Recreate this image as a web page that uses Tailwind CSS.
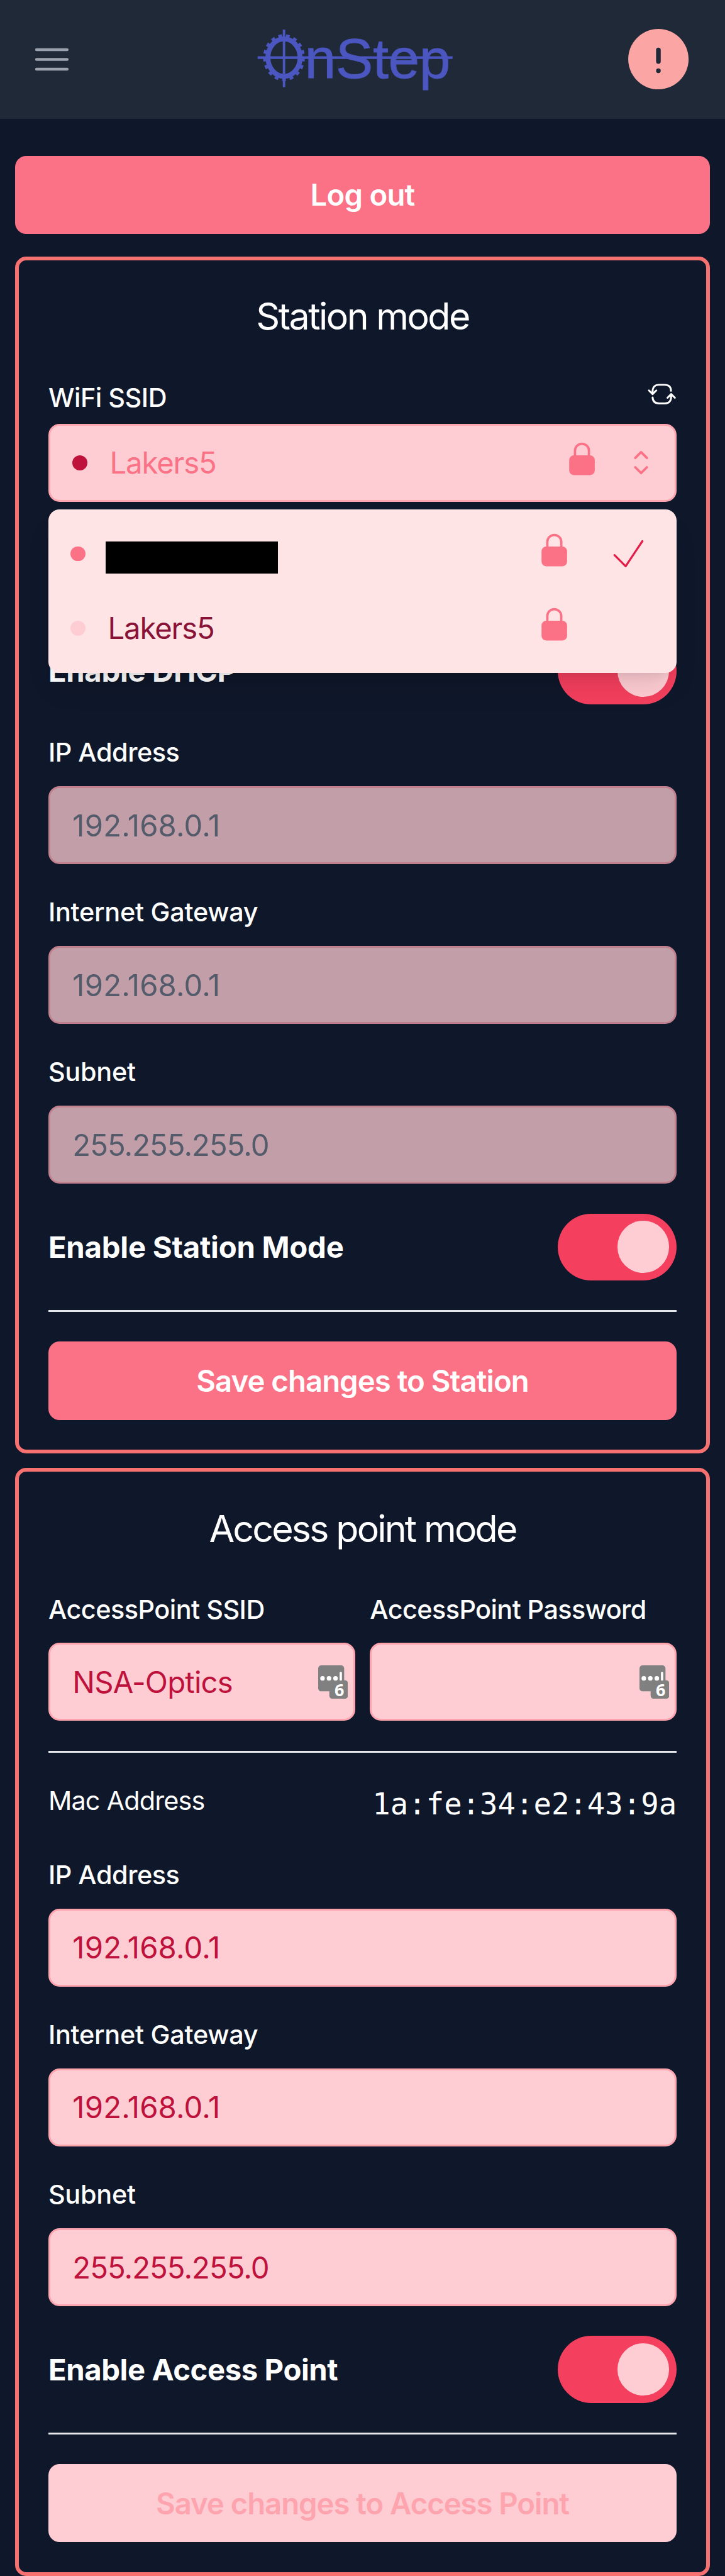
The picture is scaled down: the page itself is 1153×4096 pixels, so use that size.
<!DOCTYPE html>
<html lang="en" class="text-[47.28px]">
<head>
<meta charset="utf-8">
<meta name="viewport" content="width=device-width, initial-scale=1">
<title>OnStep WiFi</title>
<script src="https://cdn.jsdelivr.net/npm/@tailwindcss/browser@4"></script>
</head>
<body class="bg-[#0f172a] font-[Inter,sans-serif] text-base text-white overflow-x-hidden">
<svg class="hidden">
  <defs>
    <symbol id="lock" viewBox="0 0 24 24">
      <path d="M16.5 10.5V6.75a4.5 4.5 0 1 0-9 0v3.75" fill="none" stroke="currentColor" stroke-width="1.5" stroke-linecap="round"/>
      <path d="M6.75 21.75h10.5a2.25 2.25 0 0 0 2.25-2.25v-6.75a2.25 2.25 0 0 0-2.25-2.25H6.75a2.25 2.25 0 0 0-2.25 2.25v6.75a2.25 2.25 0 0 0 2.25 2.25z" fill="currentColor" stroke="currentColor" stroke-width="1.5"/>
    </symbol>
    <symbol id="passkey" viewBox="99 54 144 162">
      <rect x="99" y="54" width="126" height="126" rx="15" fill="#808080"/>
      <rect x="153" y="126" width="90" height="90" rx="15" fill="#808080"/>
      <circle cx="120" cy="117" r="11" fill="#fff"/><circle cx="151.500" cy="117" r="11" fill="#fff"/><circle cx="183" cy="117" r="11" fill="#fff"/>
      <rect x="203" y="86" width="11" height="42" rx="3" fill="#fff"/>
      <text x="202" y="203" text-anchor="middle" font-family="Open Sans, sans-serif" font-weight="700" font-size="82" fill="#fff">6</text>
    </symbol>
  </defs>
</svg>

<header class="h-16 px-4 bg-[#1f2937] flex items-center justify-between">
  <button class="w-8" aria-label="Menu">
    <svg class="size-6 text-[#9ca3af]" viewBox="0 0 24 24" fill="none" stroke="currentColor" stroke-width="1.5" stroke-linecap="round"><path d="M3.750 6.750h16.500M3.750 12h16.500M3.750 17.250h16.500"/></svg>
  </button>
  <svg class="w-[6.625rem] h-8 overflow-visible blur-[0.7px]" viewBox="414 48 318 96" fill="none" stroke="#4b56c0">
    <ellipse cx="458.300" cy="93.300" rx="26" ry="30.200" stroke-width="8"/>
    <ellipse cx="458.300" cy="93.300" rx="31" ry="35" stroke-width="5.500" stroke-dasharray="6 6.200"/>
    <path d="M458.300 48v93" stroke-width="4"/>
    <path d="M415.700 93.300H730.500" stroke-width="4.500"/>
    <text x="492" y="126.500" textLength="235" font-family="Liberation Sans, Arial, sans-serif" font-size="90" fill="#4b56c0" stroke-width="1">nStep</text>
  </svg>
  <svg class="size-10 text-[#fca5a5]" viewBox="0 0 24 24" fill="currentColor"><path fill-rule="evenodd" d="M2.250 12c0-5.385 4.365-9.750 9.750-9.750s9.750 4.365 9.750 9.750-4.365 9.750-9.750 9.750S2.250 17.385 2.250 12zM12 8.250a.75.75 0 0 1 .75.75v3.750a.75.75 0 0 1-1.500 0V9a.75.75 0 0 1 .75-.75zm0 8.250a.75.75 0 1 0 0-1.500.75.75 0 0 0 0 1.500z" clip-rule="evenodd"/></svg>
</header>

<main class="px-2 pt-5 flex flex-col">
  <button class="h-[2.625rem] pt-px rounded-md bg-[#fb7185] font-semibold tracking-[-0.016em]">Log out</button>

  <section class="mt-3 border-[6px] border-[#f87171] rounded-md p-4 flex flex-col">
    <h2 class="text-xl leading-7 text-center tracking-[-0.043em] translate-y-px">Station mode</h2>
    <div class="mt-5 flex justify-between">
      <label class="text-sm font-medium tracking-[-0.011em]">WiFi SSID</label>
      <svg class="size-4" viewBox="432 36 144 144" fill="none" stroke="#fff" stroke-width="9" stroke-linecap="round" stroke-linejoin="round">
        <path d="M441 90l18 18 18-18M459 106V96c0-22 12-33 30-33h28c20 0 31 10 31 29"/>
        <path d="M531 126l18-18 18 18M549 110v10c0 22-12 33-30 33h-28c-20 0-31-10-32-29"/>
      </svg>
    </div>
    <div class="relative mt-1">
      <div class="h-[2.625rem] rounded-md border-[3px] border-[#fda4af] bg-[#fecdd3] pl-3 pr-2 flex items-center text-[#fb7185]">
        <span class="size-2 rounded-full bg-[#be123c]"></span>
        <span class="ml-3 pt-[2px] flex-1 tracking-[-0.024em]">Lakers5</span>
        <svg class="size-5 mb-1"><use href="#lock"/></svg>
        <svg class="size-5 ml-3" viewBox="0 0 24 24" fill="none" stroke="currentColor" stroke-width="1.5" stroke-linecap="round" stroke-linejoin="round"><path d="M8.250 15 12 18.750 15.750 15m-7.500-6L12 5.250 15.750 9"/></svg>
      </div>
      <ul class="absolute z-10 inset-x-0 top-full mt-1 py-1 rounded-md bg-[#ffe4e6] text-[#881337] shadow-[0_30px_45px_-9px_rgb(0_0_0/0.1),0_12px_18px_-12px_rgb(0_0_0/0.1)]">
        <li class="h-10 pl-3 pr-3.5 flex items-center">
          <span class="size-2 rounded-full bg-[#fb7185]"></span>
          <span class="ml-[0.67rem] mt-1 w-[5.800rem] h-[1.080rem] bg-black"></span>
          <svg class="size-5 ml-auto mb-1 text-[#fb7185]"><use href="#lock"/></svg>
          <svg class="size-6 ml-[1.125rem] text-[#e11d48]" viewBox="0 0 24 24" fill="none" stroke="currentColor" stroke-width="1.1" stroke-linecap="round" stroke-linejoin="round"><path d="m4.500 12.750 6 6 9-13.500"/></svg>
        </li>
        <li class="h-10 pl-3 pr-3.5 flex items-center">
          <span class="size-2 rounded-full bg-[#fecdd3]"></span>
          <span class="ml-3 pt-[2px] tracking-[-0.024em]">Lakers5</span>
          <svg class="size-5 ml-auto mr-[2.625rem] mb-1 text-[#fb7185]"><use href="#lock"/></svg>
        </li>
      </ul>
    </div>
    <div class="mt-[4.5625rem] flex items-center justify-between">
      <span class="font-bold pt-[2px] tracking-[-0.007em]">Enable DHCP</span>
      <span class="w-16 h-9 px-1 rounded-full bg-[#f43f5e] flex items-center justify-end"><span class="size-7 rounded-full bg-[#fecdd3]"></span></span>
    </div>
    <label class="mt-4 text-sm font-medium tracking-[-0.011em]">IP Address</label>
    <div class="mt-2 h-[2.625rem] px-3 pt-[2px] rounded-md border-[3px] border-[#fda4af] bg-[#fecdd3] text-[#6b7280] opacity-75 flex items-center tracking-[0.003em]">192.168.0.1</div>
    <label class="mt-4 text-sm font-medium tracking-[-0.006em]">Internet Gateway</label>
    <div class="mt-2 h-[2.625rem] px-3 pt-[2px] rounded-md border-[3px] border-[#fda4af] bg-[#fecdd3] text-[#6b7280] opacity-75 flex items-center tracking-[0.003em]">192.168.0.1</div>
    <label class="mt-4 text-sm font-medium tracking-[-0.006em]">Subnet</label>
    <div class="mt-2 h-[2.625rem] px-3 pt-[2px] rounded-md border-[3px] border-[#fda4af] bg-[#fecdd3] text-[#6b7280] opacity-75 flex items-center tracking-[-0.02em]">255.255.255.0</div>
    <div class="mt-4 flex items-center justify-between">
      <span class="font-bold pt-[2px] tracking-[-0.005em]">Enable Station Mode</span>
      <span class="w-16 h-9 px-1 rounded-full bg-[#f43f5e] flex items-center justify-end"><span class="size-7 rounded-full bg-[#fecdd3]"></span></span>
    </div>
    <hr class="mt-4 border-t-[3px] border-[#e5e7eb]">
    <button class="mt-4 h-[2.625rem] pt-[2px] rounded-md bg-[#fb7185] font-semibold tracking-[-0.02em]">Save changes to Station</button>
  </section>

  <section class="mt-2 border-[6px] border-[#f87171] rounded-md p-4 flex flex-col">
    <h2 class="text-xl leading-7 text-center tracking-[-0.048em] translate-y-[2px]">Access point mode</h2>
    <div class="mt-5 grid grid-cols-2 gap-2">
      <div class="flex flex-col">
        <label class="text-sm font-medium tracking-[-0.012em]">AccessPoint SSID</label>
        <div class="mt-2 h-[2.625rem] pl-3 pr-[0.1875rem] rounded-md border-[3px] border-[#fda4af] bg-[#fecdd3] text-[#be123c] flex items-center justify-between"><span class="pt-[2px] tracking-[-0.017em]">NSA-Optics</span><svg class="w-4 h-[1.125rem]"><use href="#passkey"/></svg></div>
      </div>
      <div class="flex flex-col">
        <label class="text-sm font-medium whitespace-nowrap tracking-[-0.014em]">AccessPoint Password</label>
        <div class="mt-2 h-[2.625rem] pl-3 pr-[0.1875rem] rounded-md border-[3px] border-[#fda4af] bg-[#fecdd3] flex items-center justify-end"><svg class="w-4 h-[1.125rem]"><use href="#passkey"/></svg></div>
      </div>
    </div>
    <hr class="mt-4 border-t-[3px] border-[#e5e7eb]">
    <div class="mt-4 h-6 flex justify-between">
      <span class="text-sm tracking-[-0.02em]">Mac Address</span>
      <span class="font-['DejaVu_Sans_Mono',monospace] leading-6">1a:fe:34:e2:43:9a</span>
    </div>
    <label class="mt-4 text-sm font-medium tracking-[-0.011em]">IP Address</label>
    <div class="mt-2 h-[2.625rem] px-3 pt-[2px] rounded-md border-[3px] border-[#fda4af] bg-[#fecdd3] text-[#be123c] flex items-center tracking-[0.003em]">192.168.0.1</div>
    <label class="mt-4 text-sm font-medium tracking-[-0.006em]">Internet Gateway</label>
    <div class="mt-2 h-[2.625rem] px-3 pt-[2px] rounded-md border-[3px] border-[#fda4af] bg-[#fecdd3] text-[#be123c] flex items-center tracking-[0.003em]">192.168.0.1</div>
    <label class="mt-4 text-sm font-medium tracking-[-0.006em]">Subnet</label>
    <div class="mt-2 h-[2.625rem] px-3 pt-[2px] rounded-md border-[3px] border-[#fda4af] bg-[#fecdd3] text-[#be123c] flex items-center tracking-[-0.02em]">255.255.255.0</div>
    <div class="mt-4 flex items-center justify-between">
      <span class="font-bold pt-[2px] tracking-[-0.009em]">Enable Access Point</span>
      <span class="w-16 h-9 px-1 rounded-full bg-[#f43f5e] flex items-center justify-end"><span class="size-7 rounded-full bg-[#fecdd3]"></span></span>
    </div>
    <hr class="mt-4 border-t-[3px] border-[#e5e7eb]">
    <button class="mt-4 h-[2.625rem] pt-[2px] rounded-md bg-[#fecdd3] text-[#fda4af] font-semibold tracking-[-0.022em]">Save changes to Access Point</button>
  </section>
</main>
</body>
</html>
